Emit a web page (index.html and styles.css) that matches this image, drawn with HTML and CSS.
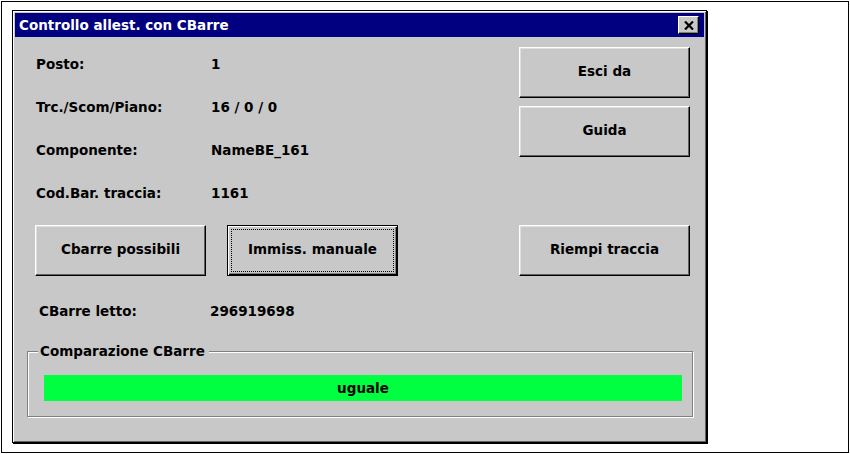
FILE: index.html
```html
<!DOCTYPE html>
<html lang="it">
<head>
  <meta charset="UTF-8" />
  <title>Controllo allest. con CBarre</title>
  <link rel="stylesheet" href="styles.css">
</head>
<body>
  <div class="sheet">
    <div class="dialog">
      <div class="titlebar">
        <span class="title">Controllo allest. con CBarre</span>
        <button class="close" aria-label="Chiudi">
          <svg width="10" height="9" viewBox="0 0 10 9"><path d="M1 0.5 L9 8.5 M9 0.5 L1 8.5" stroke="#000" stroke-width="2.2"/></svg>
        </button>
      </div>

      <div class="top">
        <div class="fields">
          <div class="row"><span class="label">Posto:</span><span class="value">1</span></div>
          <div class="row"><span class="label">Trc./Scom/Piano:</span><span class="value">16 / 0 / 0</span></div>
          <div class="row"><span class="label">Componente:</span><span class="value">NameBE_161</span></div>
          <div class="row"><span class="label">Cod.Bar. traccia:</span><span class="value">1161</span></div>
        </div>
        <div class="side">
          <button class="btn">Esci da</button>
          <button class="btn">Guida</button>
        </div>
      </div>

      <div class="actions">
        <button class="btn">Cbarre possibili</button>
        <button class="btn default">Immiss. manuale</button>
        <button class="btn push-right">Riempi traccia</button>
      </div>

      <div class="row read"><span class="label">CBarre letto:</span><span class="value">296919698</span></div>

      <fieldset class="group">
        <legend>Comparazione CBarre</legend>
        <div class="status">uguale</div>
      </fieldset>
    </div>
  </div>
</body>
</html>
```

FILE: styles.css
```css
body {
  margin: 0;
  background: #fff;
  font-family: "DejaVu Sans", sans-serif;
  font-size: 13.5px;
  font-weight: bold;
  color: #000;
}
.sheet {
  margin: 1px;
  width: 848px;
  height: 452px;
  box-sizing: border-box;
  border: 1px solid #000;
  padding: 8px 0 0 10px;
}
.dialog {
  width: 695px;
  height: 433px;
  box-sizing: border-box;
  border: 1px solid #000;
  padding: 2px;
  background: #c8c8c8;
  box-shadow: inset 1px 1px #fff, inset -1px -1px #606060, 1px 1px #000;
}
.titlebar {
  height: 24px;
  background: #000080;
  display: flex;
  align-items: center;
  justify-content: space-between;
  padding: 0 5px 0 4px;
}
.title {
  color: #fff;
}
.close {
  width: 21px;
  height: 18px;
  padding: 0;
  display: flex;
  align-items: center;
  justify-content: center;
  background: #c8c8c8;
  border: 1px solid;
  border-color: #fff #000 #000 #fff;
  box-shadow: inset -1px -1px #808080;
}
.top {
  display: flex;
  justify-content: space-between;
}
.fields {
  padding: 6px 0 0 21px;
}
.row {
  display: flex;
  align-items: center;
  height: 42px;
}
.row + .row {
  height: 43px;
}
.label {
  width: 175px;
}
.side {
  display: flex;
  flex-direction: column;
  gap: 8px;
  padding-top: 10px;
  margin-right: 14px;
}
.btn {
  width: 171px;
  height: 51px;
  font: inherit;
  color: #000;
  background: #c8c8c8;
  border: 1px solid;
  border-color: #fff #000 #000 #fff;
  box-shadow: inset -1px -1px #606060, inset 1px 1px #dfdfdf;
  padding: 0 0 4px;
}
.btn.default {
  border-color: #000;
  box-shadow: inset 1px 1px #fff, inset -1px -1px #000, inset -2px -2px #808080;
  outline: 1px dotted #000;
  outline-offset: -5px;
}
.actions {
  display: flex;
  gap: 21px;
  margin-top: 11px;
  padding: 0 14px 0 20px;
}
.push-right {
  margin-left: auto;
}
.read {
  margin-top: 24px;
  height: 22px;
  padding-left: 24px;
}
.read .label {
  width: 171px;
}
.group {
  margin: 21px 11px 0 12px;
  padding: 0;
  min-width: 0;
  border: 1px solid #808080;
  box-shadow: inset 1px 1px #fff, 1px 1px #fff;
}
.group legend {
  margin-left: 10px;
  padding: 0 4px 0 2px;
  line-height: 16px;
  background: #c8c8c8;
}
.status {
  margin: 16px 10px 15px 16px;
  height: 26px;
  background: #00ff40;
  display: flex;
  align-items: center;
  justify-content: center;
}
```
